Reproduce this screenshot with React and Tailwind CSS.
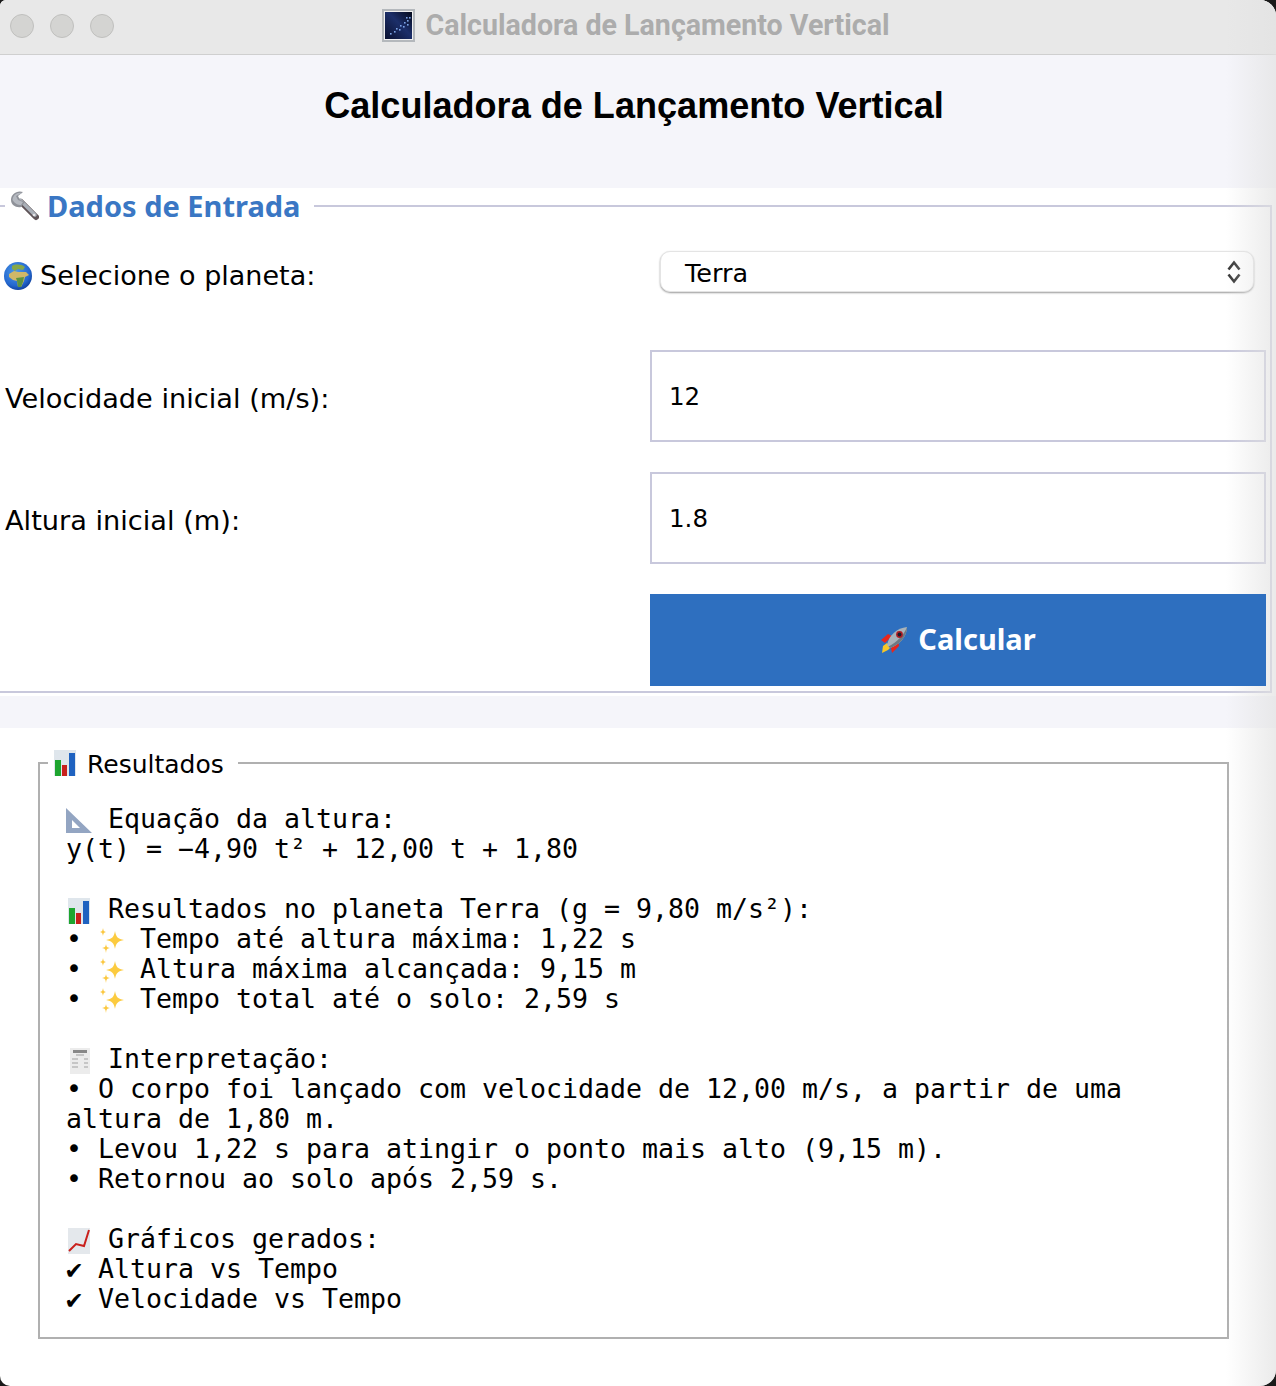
const uiFont = "font-['DejaVu_Sans',sans-serif]";
const boldFont = "font-['Noto_Sans',sans-serif] font-bold";
const emojiClass = 'inline-block align-[-6px]';

// Emoji drawn by hand, no colour emoji font in the sandbox
function Wrench() {
  return (
    <svg width="30" height="30" viewBox="0 0 30 30" className="shrink-0">
      <path d="M12 11 L27 26" stroke="#5f5458" strokeWidth="6" strokeLinecap="round" />
      <path d="M11 9 L26 24" stroke="#aab0b8" strokeWidth="3.5" strokeLinecap="round" />
      <path d="M14 1 C8 -1 2 3 2 9 C2 14 7 17 12 16 L16 11 L11 9 L9 5 Z" fill="#8f9299" />
      <path d="M13 2 C8 1 4 4 3.5 9 C6 13 9 14 12 14 L14 11 L9 9 L7 5 Z" fill="#b5b9c0" />
      <circle cx="25" cy="24" r="1.3" fill="#e4e4e8" />
    </svg>
  );
}

function Globe() {
  return (
    <svg width="28" height="28" viewBox="0 0 28 28" className="shrink-0">
      <defs>
        <radialGradient id="sea" cx="0.42" cy="0.35" r="0.7">
          <stop offset="0" stopColor="#4f9be8" />
          <stop offset="0.7" stopColor="#2468cf" />
          <stop offset="1" stopColor="#0d3a95" />
        </radialGradient>
      </defs>
      <circle cx="14" cy="14" r="14" fill="url(#sea)" />
      <path d="M8 4 C11 2 17 2 21 5 L19 8 L14 7 L11 9 L8 7 Z" fill="#86a84a" />
      <path d="M5 12 L10 9 L14 10 L22 10 L25 13 L21 15 L20 19 L17 25 L14 25 L13 19 L9 18 L5 15 Z" fill="#d0b868" />
      <path d="M12 16 L20 15 L19 20 L17 25 L14 25 L13 19 Z" fill="#5d9440" />
    </svg>
  );
}

function Rocket() {
  return (
    <svg width="28" height="28" viewBox="0 0 28 28" className="shrink-0">
      <path d="M1 14 L8 8 L12 10 L5 17 Z" fill="#e8261c" />
      <path d="M12 27 L19 20 L18 15 L11 22 Z" fill="#e8261c" />
      <path d="M2 27 L3 20 L7 17 L11 21 L8 24 Z" fill="#f7c626" />
      <path d="M7 19 C9 9 17 2 27 1 C27 11 19 19 10 22 Z" fill="#a9b3ba" />
      <path d="M10 22 C19 19 27 11 27 1 C24 9 17 16 8.5 20.5 Z" fill="#6d7a84" />
      <circle cx="19.5" cy="8.5" r="3.4" fill="#b01d24" />
      <circle cx="19.5" cy="8.5" r="1.9" fill="#1c1c2c" />
    </svg>
  );
}

function BarChart({ className = emojiClass }) {
  return (
    <svg width="26" height="26" viewBox="0 0 26 26" className={className}>
      <rect x="2" width="22" height="26" fill="#dfe6ec" />
      <rect x="3" y="10" width="6" height="16" fill="#1ea52f" />
      <rect x="10" y="15" width="5" height="11" fill="#c8201c" />
      <rect x="17" y="3" width="6" height="23" fill="#1f62c0" />
    </svg>
  );
}

function Ruler() {
  return (
    <svg width="26" height="26" viewBox="0 0 26 26" className={emojiClass}>
      <path fillRule="evenodd" d="M0 0 L26 25 L0 25 Z M6 12 L6 20 L14 20 Z" fill="#93a5c2" />
    </svg>
  );
}

function Sparkles() {
  return (
    <svg width="26" height="26" viewBox="0 0 26 26" className={emojiClass}>
      <path d="M17 3 C18 9 20 11 26 12 C20 13 18 15 17 21 C16 15 14 13 8 12 C14 11 16 9 17 3 Z" fill="#fccb3f" />
      <path d="M5 0 C5.5 3 6 3.5 8 4 C6 4.5 5.5 5 5 8 C4.5 5 4 4.5 2 4 C4 3.5 4.5 3 5 0 Z" fill="#fbc840" />
      <path d="M8 16 C8.5 19 9 19.5 12 20 C9 20.5 8.5 21 8 25 C7.5 21 7 20.5 4 20 C7 19.5 7.5 19 8 16 Z" fill="#fbc840" />
    </svg>
  );
}

function Receipt() {
  return (
    <svg width="26" height="26" viewBox="0 0 26 26" className={emojiClass}>
      <rect x="4" width="20" height="26" fill="#ececec" />
      <rect x="7" y="2" width="14" height="3" fill="#888" />
      <path d="M10 7 H18 M6 11 H12 M18 11 H22 M6 15 H12 M18 15 H22 M6 19 H12 M18 19 H22" stroke="#a0a0a0" strokeWidth="1.2" />
    </svg>
  );
}

function LineChart() {
  return (
    <svg width="26" height="26" viewBox="0 0 26 26" className={emojiClass}>
      <rect x="2" width="22" height="26" fill="#e4e8ec" />
      <path d="M3 23 L10 16 L18 18 L23 2" fill="none" stroke="#c9201c" strokeWidth="2" />
    </svg>
  );
}

function AppIcon() {
  const stars = [[8, 24], [12, 22], [14, 19], [17, 20], [18, 16], [21, 17], [22, 13], [25, 11], [25, 15], [27, 8], [24, 8]];
  return (
    <svg width="33" height="33" viewBox="0 0 33 33" className="shrink-0">
      <defs>
        <linearGradient id="sky" x1="0" y1="1" x2="1" y2="0">
          <stop offset="0" stopColor="#0a1130" />
          <stop offset="0.55" stopColor="#1c2f6a" />
          <stop offset="1" stopColor="#050a1c" />
        </linearGradient>
      </defs>
      <rect x="1" y="1" width="31" height="31" fill="#f0f0f0" stroke="#b4b8bc" strokeWidth="2" />
      <rect x="3" y="3" width="27" height="27" fill="url(#sky)" />
      {stars.map(([x, y]) => (
        <rect key={`${x}-${y}`} x={x} y={y} width="1.6" height="1.6" fill="#7da4e6" />
      ))}
    </svg>
  );
}

function UpDownArrows() {
  return (
    <svg width="14" height="24" viewBox="0 0 14 24" fill="none" stroke="#333" strokeWidth="2.6">
      <path d="M1.5 9.5 L7 2.5 L12.5 9.5" />
      <path d="M1.5 14.5 L7 21.5 L12.5 14.5" />
    </svg>
  );
}

function FormRow({ label, children }) {
  return (
    <div className="grid grid-cols-[645px_616px] items-center">
      <span className={`${uiFont} text-[27.2px] text-black pt-[6px]`}>{label}</span>
      {children}
    </div>
  );
}

function TextField({ value }) {
  return (
    <div className={`${uiFont} h-[92px] border-2 border-[#c8c8dc] bg-white px-[17px] pt-[3px] flex items-center text-[24.5px] text-black`}>
      {value}
    </div>
  );
}

export default function App() {
  return (
    <div className="w-[1276px] h-[1386px] bg-[#1a1a1a] overflow-hidden">
      <div className="relative w-full h-full rounded-tl-[6px] rounded-bl-[10px] rounded-tr-[16px] rounded-br-[16px] overflow-hidden bg-white">
        {/* Title bar */}
        <div className="h-[55px] bg-[#e8e8e8] border-b border-[#cfcfcf] flex items-center">
          <div className="flex gap-[16px] pl-[10px] pb-[2px]">
            <span className="w-[24px] h-[24px] rounded-full bg-[#d4d4d2] border border-[#c0c0be]" />
            <span className="w-[24px] h-[24px] rounded-full bg-[#d4d4d2] border border-[#c0c0be]" />
            <span className="w-[24px] h-[24px] rounded-full bg-[#d4d4d2] border border-[#c0c0be]" />
          </div>
          <div className="flex-1 flex items-center justify-center gap-[10px] pr-[118px] pb-[3px]">
            <AppIcon />
            <span className="font-['Roboto',sans-serif] font-bold text-[28.6px] text-[#acacac]">Calculadora de Lançamento Vertical</span>
          </div>
        </div>

        {/* Heading */}
        <div className="h-[133px] bg-[#f5f5fa] pt-[28px] pr-[8px] text-center">
          <h1 className="font-['Liberation_Sans',sans-serif] font-bold text-[36.1px] leading-[46px] text-black">Calculadora de Lançamento Vertical</h1>
        </div>

        {/* Input panel */}
        <div className="bg-white h-[508px] overflow-hidden">
          <fieldset className="-ml-[2px] mr-[4px] h-[505px] border-2 border-[#c8c8dc] pl-[5px] pr-[2px]">
            <legend className={`${boldFont} h-[36px] pl-[4px] pr-[14px] flex items-center gap-[8px] text-[29px] leading-none text-[#3a77c4]`}>
              <Wrench /><span className="pb-[2px]">Dados de Entrada</span>
            </legend>
            <div className="flex flex-col mt-[25px]">
              <div className="grid grid-cols-[645px_616px] items-start h-[42px]">
                <span className={`${uiFont} text-[27px] text-black flex items-center gap-[8px] -ml-[1px] pt-[7px]`}><Globe />Selecione o planeta:</span>
                <div className={`${uiFont} mt-[2px] ml-[10px] w-[594px] h-[41px] rounded-[10px] bg-white border border-[#e4e4e4] shadow-[0_1px_2px_rgba(0,0,0,0.4)] pl-[24px] pr-[12px] flex items-center justify-between text-[25.5px] text-black`}>
                  <span className="pt-[3px]">Terra</span>
                  <UpDownArrows />
                </div>
              </div>
              <div className="mt-[59px]">
                <FormRow label="Velocidade inicial (m/s):"><TextField value="12" /></FormRow>
              </div>
              <div className="mt-[30px]">
                <FormRow label="Altura inicial (m):"><TextField value="1.8" /></FormRow>
              </div>
              <div className="grid grid-cols-[645px_616px] mt-[30px]">
                <div />
                <button className={`${boldFont} relative z-10 h-[92px] bg-[#2e6fbf] text-white text-[29px] flex items-center justify-center gap-[10px]`}>
                  <Rocket /><span className="pb-[2px]">Calcular</span>
                </button>
              </div>
            </div>
          </fieldset>
        </div>

        <div className="h-[32px] bg-[#f5f5fa]" />

        {/* Results */}
        <div className="bg-white px-[38px] pt-[20px]">
          <fieldset className="w-[1191px] h-[591px] border-2 border-[#b0b0b0] pl-[26px]">
            <legend className={`${uiFont} -ml-[18px] h-[30px] pl-[4px] pr-[14px] flex items-center gap-[9px] text-[25px] leading-none text-black`}>
              <BarChart className="shrink-0" /><span className="pt-[3px]">Resultados</span>
            </legend>
            <div className="mt-[26px] font-['DejaVu_Sans_Mono',monospace] text-[26.58px] leading-[30px] text-black whitespace-pre">
              <div><Ruler /> Equação da altura:</div>
              <div>y(t) = −4,90 t² + 12,00 t + 1,80</div>
              <div>&nbsp;</div>
              <div><BarChart /> Resultados no planeta Terra (g = 9,80 m/s²):</div>
              <div>• <Sparkles /> Tempo até altura máxima: 1,22 s</div>
              <div>• <Sparkles /> Altura máxima alcançada: 9,15 m</div>
              <div>• <Sparkles /> Tempo total até o solo: 2,59 s</div>
              <div>&nbsp;</div>
              <div><Receipt /> Interpretação:</div>
              <div>• O corpo foi lançado com velocidade de 12,00 m/s, a partir de uma</div>
              <div>altura de 1,80 m.</div>
              <div>• Levou 1,22 s para atingir o ponto mais alto (9,15 m).</div>
              <div>• Retornou ao solo após 2,59 s.</div>
              <div>&nbsp;</div>
              <div><LineChart /> Gráficos gerados:</div>
              <div>✔ Altura vs Tempo</div>
              <div>✔ Velocidade vs Tempo</div>
            </div>
          </fieldset>
        </div>

        {/* Soft edge shadow along the right side */}
        <div className="absolute top-0 right-0 bottom-0 w-[50px] bg-gradient-to-r from-transparent to-[#e2e2e2] opacity-70 pointer-events-none" />
      </div>
    </div>
  );
}
